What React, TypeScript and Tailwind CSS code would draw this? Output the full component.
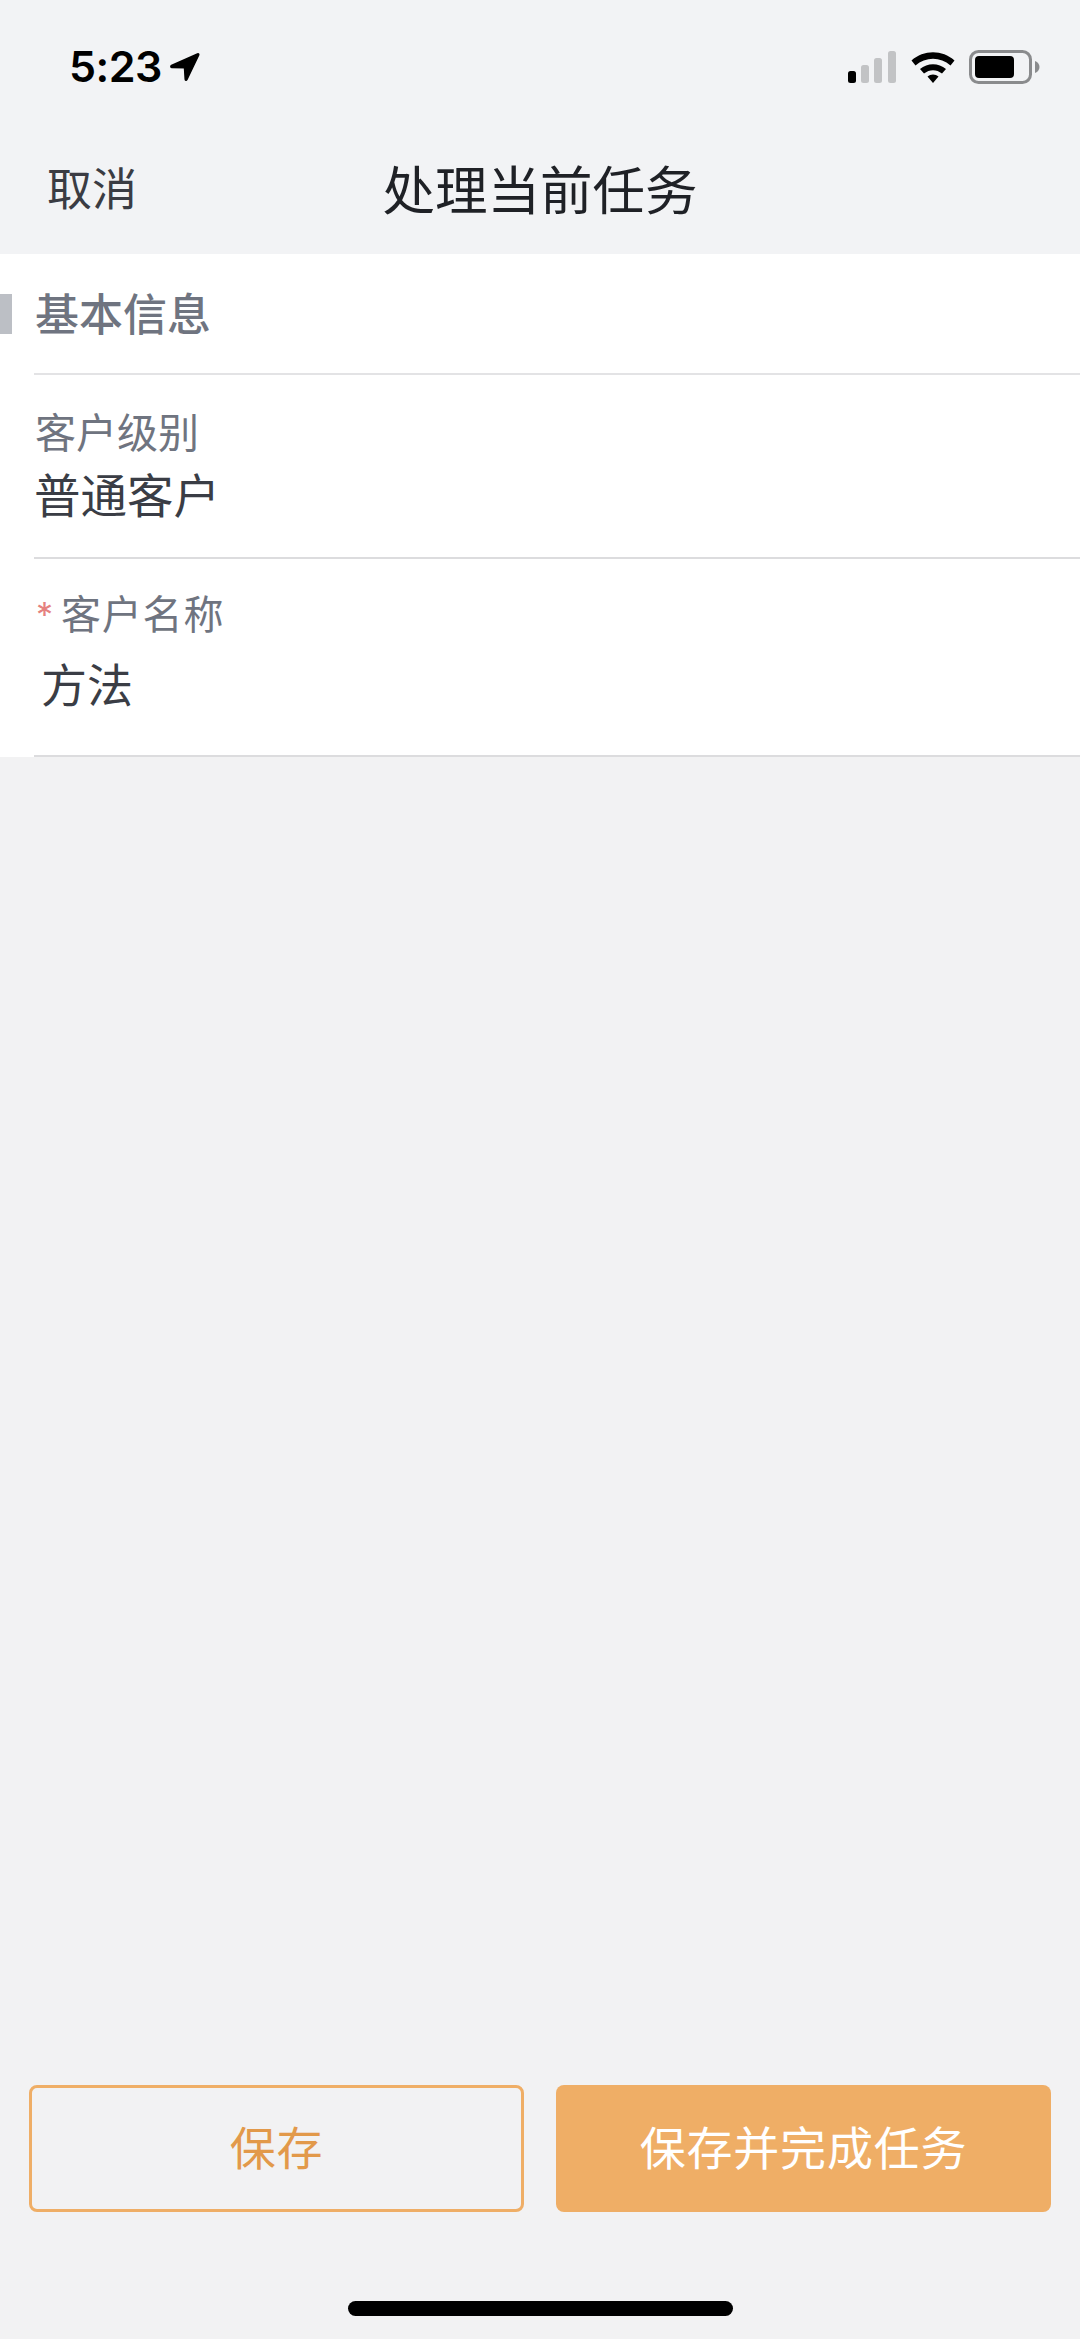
import React from 'react';

const cjk = "font-['Inter','Noto_Sans_CJK_SC',sans-serif]";

const StatusIcons = () => (
  <div className="flex items-center">
    <svg width="50" height="32" viewBox="0 0 50 32" className="block">
      <rect x="1" y="20" width="8" height="12" rx="2.5" fill="#000" />
      <rect x="14" y="14" width="8" height="18" rx="2.5" fill="#c2c3c5" />
      <rect x="27" y="7" width="8" height="25" rx="2.5" fill="#c2c3c5" />
      <rect x="41" y="0" width="8" height="32" rx="2.5" fill="#c2c3c5" />
    </svg>
    <svg width="44" height="32" viewBox="0 0 44 32" className="block ml-[14px]">
      <path d="M0.500 9.500C12.500 -1.500 31.500 -1.500 43.500 9.500L39.500 14.500C29.500 5.500 14.500 5.500 4.500 14.500Z" fill="#000" />
      <path d="M9 18C16.500 11.500 27.500 11.500 35 18L31 22.500C25.500 18 18.500 18 13 22.500Z" fill="#000" />
      <path d="M16.500 25.500C19.500 22.800 24.500 22.800 27.500 25.500L22 32Z" fill="#000" />
    </svg>
    <svg width="72" height="34" viewBox="0 0 72 34" className="block ml-[14px]">
      <rect x="1.500" y="1.500" width="60" height="31" rx="8" fill="none" stroke="#8a8b8d" strokeWidth="3" />
      <rect x="6" y="6" width="39" height="22" rx="4" fill="#000" />
      <path d="M66 11C69 12 70.500 14.500 70.500 17C70.500 19.500 69 22 66 23Z" fill="#8a8b8d" />
    </svg>
  </div>
);

const Field = ({ label, value, required }: { label: string; value: string; required?: boolean }) => (
  <div className={required ? 'h-[198px] pl-[36px] pt-[33px]' : 'h-[182px] pl-[35px] pt-[35px]'}>
    <div className={`flex items-center h-[46px] leading-[46px] text-[#6f7480] ${required ? 'text-[40px] tracking-[0.8px]' : 'text-[41px]'}`}>
      {required && <span className="text-[#e5827f] text-[34px] w-[25px] leading-[46px] tracking-normal">*</span>}
      {label}
    </div>
    <div className={required ? 'text-[46px] text-[#3a3d45] mt-[19px] pl-[5px] leading-[56px]' : 'text-[46.5px] text-[#3a3d45] mt-[10px] leading-[60px] ml-[-1px]'}>
      {value}
    </div>
  </div>
);

export default function App() {
  return (
    <div className={`h-[2339px] w-[1080px] bg-[#f2f2f3] flex flex-col overflow-hidden ${cjk}`}>
      <header className="h-[254px] bg-[#f2f3f5] shrink-0">
        <div className="h-[130px] flex items-start justify-between pl-[69px] pr-[39px] pt-[44px]">
          <div className="flex items-center h-[45px]">
            <span className="font-['Inter',sans-serif] text-[43px] font-semibold leading-[45px] text-black tracking-[-0.5px]">5:23</span>
            <svg width="30" height="30" viewBox="0 0 30 30" className="block ml-[8px]">
              <path d="M1.500 13.500L27.500 2C28.500 1.600 29 2.200 28.600 3.200L17 27.500C16.300 28.800 15.300 28.500 15.200 27.300L14.500 15.800L2 15.600C0.700 15.500 0.500 14.100 1.500 13.500Z" fill="#000" stroke="#000" strokeWidth="1.500" strokeLinejoin="round" />
            </svg>
          </div>
          <div className="pt-[6px]">
            <StatusIcons />
          </div>
        </div>
        <div className="relative h-[124px] flex items-center justify-center">
          <span className="absolute left-[47px] top-[33px] text-[45px] leading-[54px] text-[#3a3c43]">取消</span>
          <h1 className="text-[52.500px] leading-[70px] font-normal text-[#1f2126] mt-[-2px]">处理当前任务</h1>
        </div>
      </header>

      <section className="bg-white shrink-0">
        <div className="h-[119px] relative pl-[35px] pt-[35px]">
          <div className="absolute left-0 top-[40px] h-[40px] w-[12px] bg-[#bcbfc5]" />
          <div className="text-[44px] leading-[52px] font-medium text-[#6f7480]">基本信息</div>
        </div>
        <div className="ml-[34px] h-[2px] bg-[#e3e3e5]" />
        <Field label="客户级别" value="普通客户" />
        <div className="ml-[34px] h-[2px] bg-[#dcdcde]" />
        <Field label="客户名称" value="方法" required />
      </section>
      <div className="ml-[34px] h-[2px] bg-[#dcdcde] mt-[-2px] shrink-0" />

      <main className="flex-1" />

      <footer className="shrink-0 px-[29px] grid grid-cols-2 gap-[32px] h-[127px]">
        <button className="rounded-[8px] border-[3px] border-[#efae66] text-[#e2994a] text-[46px] leading-none tracking-[0.8px] pb-[2px]">保存</button>
        <button className="rounded-[8px] bg-[#efae66] text-white text-[46px] leading-none tracking-[0.8px] pb-[2px]">保存并完成任务</button>
      </footer>

      <div className="h-[127px] shrink-0 flex justify-center pt-[89px]">
        <div className="w-[385px] h-[15px] rounded-full bg-black" />
      </div>
    </div>
  );
}
